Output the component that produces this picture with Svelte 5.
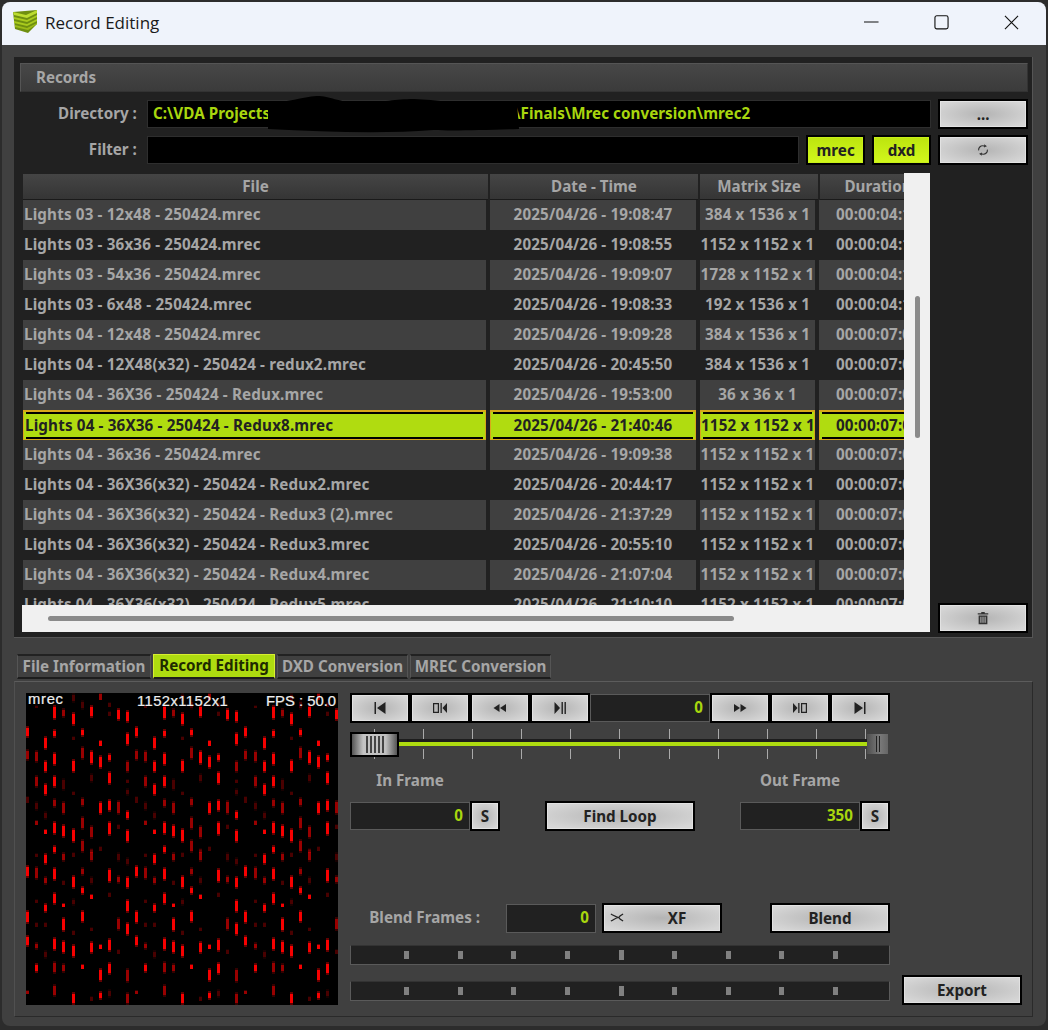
<script lang="ts">
  // Table rows: file, date, matrix, duration
  const rows = [
    ['Lights 03 - 12x48 - 250424.mrec', '2025/04/26 - 19:08:47', '384 x 1536 x 1', '00:00:04:12'],
    ['Lights 03 - 36x36 - 250424.mrec', '2025/04/26 - 19:08:55', '1152 x 1152 x 1', '00:00:04:12'],
    ['Lights 03 - 54x36 - 250424.mrec', '2025/04/26 - 19:09:07', '1728 x 1152 x 1', '00:00:04:12'],
    ['Lights 03 - 6x48 - 250424.mrec', '2025/04/26 - 19:08:33', '192 x 1536 x 1', '00:00:04:12'],
    ['Lights 04 - 12x48 - 250424.mrec', '2025/04/26 - 19:09:28', '384 x 1536 x 1', '00:00:07:02'],
    ['Lights 04 - 12X48(x32) - 250424 - redux2.mrec', '2025/04/26 - 20:45:50', '384 x 1536 x 1', '00:00:07:02'],
    ['Lights 04 - 36X36 - 250424 - Redux.mrec', '2025/04/26 - 19:53:00', '36 x 36 x 1', '00:00:07:02'],
    ['Lights 04 - 36X36 - 250424 - Redux8.mrec', '2025/04/26 - 21:40:46', '1152 x 1152 x 1', '00:00:07:02'],
    ['Lights 04 - 36x36 - 250424.mrec', '2025/04/26 - 19:09:38', '1152 x 1152 x 1', '00:00:07:02'],
    ['Lights 04 - 36X36(x32) - 250424 - Redux2.mrec', '2025/04/26 - 20:44:17', '1152 x 1152 x 1', '00:00:07:02'],
    ['Lights 04 - 36X36(x32) - 250424 - Redux3 (2).mrec', '2025/04/26 - 21:37:29', '1152 x 1152 x 1', '00:00:07:02'],
    ['Lights 04 - 36X36(x32) - 250424 - Redux3.mrec', '2025/04/26 - 20:55:10', '1152 x 1152 x 1', '00:00:07:02'],
    ['Lights 04 - 36X36(x32) - 250424 - Redux4.mrec', '2025/04/26 - 21:07:04', '1152 x 1152 x 1', '00:00:07:02'],
    ['Lights 04 - 36X36(x32) - 250424 - Redux5.mrec', '2025/04/26 - 21:10:10', '1152 x 1152 x 1', '00:00:07:02']
  ];
  const SELECTED = 7;

  // Transport icons, 16x16 box
  const icons = {
    first: 'M2.5 2h1.5v12H2.5z M13.5 2v12L5 8z',
    stepBack: 'M1 3h6v10H1z M2.2 4.200v7.600h3.600V4.200z M8.500 3h1.300v10H8.500z M15 3v10L10.500 8z',
    rewind: 'M7.5 4v8L1.500 8z M14 4v8L8 8z',
    playPause: 'M2.5 2v12L8 8z M9.500 2h1.400v12H9.500z M12.500 2h1.400v12h-1.400z',
    forward: 'M2 4v8L8 8z M8.500 4v8L14.500 8z',
    stepFwd: 'M1 3v10L5.500 8z M6.200 3h1.300v10H6.200z M9 3h6v10H9z M10.200 4.200v7.600h3.600V4.200z',
    last: 'M2.5 2v12L11 8z M12 2h1.500v12H12z'
  };

  // One 12-column period of the preview texture: col, top, bottom, brightness
  const B = 0.95, M = 0.5, D = 0.22;
  const period: number[][] = [
    [0,33,45,B],[0,56,68,M],[0,103,110,D],[0,172,185,B],[0,217,231,B],[0,242,254,B],[0,297,301,M],
    [1,12,15,D],[1,57,70,M],[1,82,95,M],[1,108,118,D],[1,127,132,M],[1,160,164,D],[1,173,187,M],[1,206,210,D],[1,229,234,D],[1,249,257,M],[1,270,280,B],
    [2,43,57,B],[2,67,80,B],[2,90,103,B],[2,118,127,D],[2,136,141,B],[2,160,172,B],[2,183,192,M],[2,210,220,B],[2,229,234,D],[2,257,266,D],
    [3,12,27,B],[3,36,45,B],[3,59,73,B],[3,82,95,B],[3,105,115,M],[3,128,142,B],[3,152,161,B],[3,174,188,B],[3,199,212,B],[3,244,258,B],[3,268,281,M],[3,291,304,M],
    [4,15,25,M],[4,85,98,D],[4,108,122,M],[4,131,145,B],[4,159,169,M],[4,187,192,D],[4,210,214,B],[4,224,239,B],[4,247,261,B],[4,270,280,M],
    [5,0,10,D],[5,19,33,B],[5,43,47,D],[5,66,80,B],[5,98,102,D],[5,135,150,B],[5,159,164,D],[5,182,196,B],[5,205,213,D],[5,237,242,D],[5,251,265,B],[5,299,312,B],
    [6,7,17,D],[6,35,44,B],[6,53,67,M],[6,104,114,M],[6,123,137,M],[6,146,160,M],[6,174,183,M],[6,193,202,B],[6,217,230,B],[6,271,276,B],
    [7,12,25,B],[7,57,72,B],[7,80,90,D],[7,132,146,M],[7,155,160,D],[7,157,169,M],[7,183,192,D],[7,201,206,B],[7,234,238,D],[7,248,261,B],[7,303,308,D],
    [8,0,7,M],[8,47,53,B],[8,62,76,B],[8,108,122,B],[8,153,158,D],[8,251,256,B],[8,275,289,B],[8,298,307,B],
    [9,9,14,D],[9,18,23,D],[9,60,69,B],[9,78,92,B],[9,106,119,B],[9,128,143,B],[9,175,190,B],[9,199,204,D],[9,245,259,B],[9,269,282,B],[9,296,305,D],
    [10,15,28,B],[10,107,122,M],[10,131,136,D],[10,159,169,D],[10,182,191,M],[10,224,238,M],[10,256,261,D],
    [11,17,30,B],[11,39,53,B],[11,67,80,M],[11,86,90,D],[11,95,103,D],[11,117,127,B],[11,136,150,B],[11,164,173,D],[11,183,196,B],[11,206,220,B],[11,229,243,B],[11,275,290,M],[11,299,312,M]
  ];
  const bars = [0, 1, 2].flatMap((k) =>
    period.map(([c, y0, y1, a]) => ({ x: (c + 12 * k) * 9.1, y0, y1, a }))
  );

  const smallTicks = Array.from({ length: 9 }, (_, i) => i);
</script>

{#snippet icon(d)}
  <svg class="glyph" viewBox="0 0 16 16" aria-hidden="true"><path d={d} fill-rule="evenodd" /></svg>
{/snippet}

{#snippet blendSlider()}
  <div class="blendSlider">
    {#each smallTicks as i}
      <span class="blendTick" class:mid={i === 4}></span>
    {/each}
  </div>
{/snippet}

<div class="window">
  <header class="titlebar">
    <svg class="logo" viewBox="0 0 24 24" aria-hidden="true">
      <polygon points="0,2 24,0 24,14 15,23 2,19" fill="#6f8f10" />
      <polygon points="0,2 13,5 24,0 24,3 14,8 1,5" fill="#bcdc30" />
      <polygon points="1,7 14,10 24,5 24,7 14,12 1,9" fill="#a9cb1e" />
      <polygon points="1,11 14,14 24,9 24,11 14,16 1,13" fill="#a9cb1e" />
      <polygon points="2,15 14,18 24,13 24,14 15,20 2,17" fill="#9cbc18" />
    </svg>
    <span class="winTitle">Record Editing</span>
    <div class="winControls">
      <svg viewBox="0 0 16 16" aria-hidden="true"><path d="M0 7.500h15.500" /></svg>
      <svg viewBox="0 0 16 16" aria-hidden="true"><rect x="1" y="0.800" width="14" height="14" rx="2" /></svg>
      <svg viewBox="0 0 16 16" aria-hidden="true"><path d="M1 1l14 14M15 1L1 15" /></svg>
    </div>
  </header>

  <main class="content">
    <section class="records">
      <div class="recordsHead">Records</div>

      <div class="formRow dirRow">
        <label class="formLabel" for="dir">Directory :</label>
        <div class="pathBox" id="dir">
          <span>C:\VDA Projects</span>
          <span class="pathTail">\Finals\Mrec conversion\mrec2</span>
          <svg class="scribble" viewBox="0 0 260 38" preserveAspectRatio="none" aria-hidden="true">
            <path d="M0 8 C20 6 35 1 50 0 C65 0 70 6 95 7 C120 6 130 3 150 3 C175 4 190 7 215 7 L256 8 L258 33 C220 34 190 35 170 34 C120 38 60 36 0 33 Z" fill="#000" />
          </svg>
        </div>
        <button class="btn sideBtn">...</button>
      </div>

      <div class="formRow filterRow">
        <label class="formLabel" for="filter">Filter :</label>
        <div class="filterBox" id="filter"></div>
        <button class="btn limeBtn">mrec</button>
        <button class="btn limeBtn">dxd</button>
        <button class="btn sideBtn" aria-label="Refresh">
          <svg class="refresh" viewBox="0 0 16 16" aria-hidden="true">
            <path d="M3 8.500C2.600 5.200 5.200 3 8 3.200l2 .6M13 7.500c.4 3.300-2.200 5.500-5 5.300l-2-.6" fill="none" stroke="#333" stroke-width="1.300" />
            <path d="M9.500 1.500l3 2.200-3.400 1.500zM6.500 14.500l-3-2.200 3.400-1.500z" fill="#333" />
          </svg>
        </button>
      </div>

      <div class="listRow">
        <div class="list">
          <div class="viewport">
            <div class="tableHead">
              <div class="th colFile">File</div>
              <div class="th colDate">Date - Time</div>
              <div class="th colMatrix">Matrix Size</div>
              <div class="th colDur">Duration</div>
            </div>
            {#each rows as row, i}
              <div class="row" class:odd={i % 2 === 0} class:selected={i === SELECTED}>
                <div class="td colFile left">{row[0]}</div>
                <div class="td colDate">{row[1]}</div>
                <div class="td colMatrix">{row[2]}</div>
                <div class="td colDur">{row[3]}</div>
              </div>
            {/each}
          </div>
          <div class="vScroll"><div class="vThumb"></div></div>
          <div class="hScroll"><div class="hThumb"></div></div>
        </div>
        <button class="btn sideBtn trashBtn" aria-label="Delete">
          <svg class="trash" viewBox="0 0 16 16" aria-hidden="true">
            <path d="M6 1h4v1.500h4v1.500H2V2.500h4z M3 5h10v10H3z M5 6.500v7h1.200v-7z M7.400 6.500v7h1.200v-7z M9.800 6.500v7H11v-7z" fill="#333" fill-rule="evenodd" />
          </svg>
        </button>
      </div>
    </section>

    <nav class="tabs">
      <div class="tab tab1">File Information</div>
      <div class="tab tab2 active">Record Editing</div>
      <div class="tab tab3">DXD Conversion</div>
      <div class="tab tab4">MREC Conversion</div>
    </nav>

    <section class="editor">
      <div class="preview">
        <svg class="previewBars" viewBox="0 0 312 312" aria-hidden="true">
          {#each bars as b}
            <rect x={b.x} y={b.y0} width="3" height={b.y1 - b.y0} fill="#f00" opacity={b.a * 0.4} />
            {#if b.y1 - b.y0 > 7}
              <rect x={b.x} y={b.y0 + 2} width="3" height={b.y1 - b.y0 - 4} fill="#f00" opacity={b.a} />
            {:else}
              <rect x={b.x} y={b.y0 + 1} width="3" height={b.y1 - b.y0 - 1} fill="#f00" opacity={b.a} />
            {/if}
          {/each}
        </svg>
        <div class="previewInfo">
          <span class="infoType">mrec</span>
          <span class="infoSize">1152x1152x1</span>
          <span class="infoFps">FPS : 50.0</span>
        </div>
      </div>

      <div class="controls">
        <div class="transport">
          <button class="btn tBtn" aria-label="First">{@render icon(icons.first)}</button>
          <button class="btn tBtn" aria-label="Step back">{@render icon(icons.stepBack)}</button>
          <button class="btn tBtn" aria-label="Rewind">{@render icon(icons.rewind)}</button>
          <button class="btn tBtn" aria-label="Play">{@render icon(icons.playPause)}</button>
          <div class="numBox frameBox">0</div>
          <button class="btn tBtn" aria-label="Forward">{@render icon(icons.forward)}</button>
          <button class="btn tBtn" aria-label="Step forward">{@render icon(icons.stepFwd)}</button>
          <button class="btn tBtn" aria-label="Last">{@render icon(icons.last)}</button>
        </div>

        <div class="timeline">
          <div class="ticks">
            {#each Array(11) as _}<span class="tick"></span>{/each}
          </div>
          <div class="rail"></div>
          <div class="thumbIn">
            {#each Array(5) as _}<span></span>{/each}
          </div>
          <div class="thumbOut"><span></span><span></span></div>
        </div>

        <div class="frameLabels">
          <div class="frameLabel">In Frame</div>
          <div></div>
          <div class="frameLabel">Out Frame</div>
        </div>

        <div class="frameRow">
          <div class="frameField">
            <div class="numBox">0</div>
            <button class="btn setBtn">S</button>
          </div>
          <button class="btn">Find Loop</button>
          <div class="frameField">
            <div class="numBox">350</div>
            <button class="btn setBtn">S</button>
          </div>
        </div>

        <div class="blendRow">
          <span class="blendLabel">Blend Frames :</span>
          <div class="numBox blendBox">0</div>
          <button class="btn xfBtn">
            <svg class="xfIcon" viewBox="0 0 16 10" aria-hidden="true">
              <path d="M1 1C5 3 7 5 10 5C7 5 5 7 1 9M15 1C11 3 10 5 10 5C10 5 11 7 15 9" fill="none" stroke="#222" stroke-width="1.400" />
            </svg>
            XF
          </button>
          <button class="btn blendBtn">Blend</button>
        </div>

        <div class="bottomRow">
          <div class="blendSliders">
            {@render blendSlider()}
            {@render blendSlider()}
          </div>
          <button class="btn exportBtn">Export</button>
        </div>
      </div>
    </section>
  </main>
</div>

<style>
  :global(body) {
    margin: 0;
    background: #2c2c2c;
  }

  .window {
    box-sizing: border-box;
    width: 1044px;
    height: 1024px;
    margin: 2px 0 0 2px;
    background: #404040;
    border-radius: 8px;
    overflow: hidden;
    font-family: "Noto Sans", "Open Sans", sans-serif;
    font-size: 15.2px;
    font-weight: 700;
    color: #a6a6a6;
  }

  /* Title bar */
  .titlebar {
    box-sizing: border-box;
    display: flex;
    align-items: center;
    height: 43px;
    padding: 0 0 3px 11px;
    background: #eff3fb;
  }

  .logo {
    width: 24px;
    height: 24px;
    margin-right: 8px;
  }

  .winTitle {
    font-family: "Open Sans", sans-serif;
    font-weight: 400;
    font-size: 17px;
    color: #1a1a1a;
  }

  .winControls {
    display: flex;
    gap: 55px;
    margin-left: auto;
    margin-right: 27px;
  }

  .winControls svg {
    width: 15px;
    height: 15px;
    fill: none;
    stroke: #111;
    stroke-width: 1.200;
  }

  /* Layout */
  .content {
    padding: 12px 13px 0 12px;
  }

  .records {
    box-sizing: border-box;
    height: 581px;
    padding: 6px 4px 0 6px;
    background: #212121;
    border-right: 1px solid #555;
    border-bottom: 1px solid #555;
  }

  .recordsHead {
    box-sizing: border-box;
    height: 29px;
    padding-left: 15px;
    line-height: 27px;
    background: linear-gradient(#474747, #3b3b3b);
    border: 1px solid #333;
    border-top-color: #555;
    border-left-color: #555;
  }

  .formRow {
    display: flex;
    align-items: center;
    gap: 7px;
    height: 30px;
  }

  .dirRow {
    margin-top: 7px;
  }

  .filterRow {
    margin-top: 6px;
  }

  .formLabel {
    width: 117px;
    margin: 0 3px 2px 0;
    text-align: right;
  }

  .pathBox,
  .filterBox {
    box-sizing: border-box;
    height: 28px;
    background: #000;
    border: 1px solid #2e2e2e;
  }

  .pathBox {
    position: relative;
    display: flex;
    width: 785px;
    padding-left: 5px;
    line-height: 24px;
    letter-spacing: 0.05px;
    color: #a8d60e;
  }

  .pathTail {
    margin-left: 244px;
  }

  .scribble {
    position: absolute;
    left: 120px;
    top: -5px;
    width: 253px;
    height: 38px;
  }

  .filterBox {
    width: 653px;
  }

  /* Buttons */
  .btn {
    box-sizing: border-box;
    width: 150px;
    height: 30px;
    padding: 0 0 1px;
    font: inherit;
    color: #222;
    background: radial-gradient(ellipse at center, #b4b4b4 0%, #d6d6d6 85%);
    border: 2px solid #000;
    box-shadow: inset 0 0 0 1px #e2e2e2;
  }

  .sideBtn {
    width: 90px;
    line-height: 20px;
  }

  .limeBtn {
    width: 59px;
    background: linear-gradient(#bce40e, #d2f81c);
    box-shadow: inset 0 0 0 1px #c8f018;
  }

  .refresh {
    display: block;
    width: 14px;
    height: 14px;
    margin: auto;
  }

  .trash {
    display: block;
    width: 14px;
    height: 14px;
    margin: auto;
  }

  /* File list */
  .listRow {
    display: flex;
    justify-content: space-between;
    align-items: flex-end;
    height: 460px;
    margin-top: 8px;
    margin-left: 2px;
  }

  .list {
    display: grid;
    grid-template-columns: 882px 26px;
    grid-template-rows: 432px 27px;
    width: 908px;
    height: 459px;
    margin-bottom: 1px;
    background: #f0f0f0;
  }

  .viewport {
    grid-column: 1;
    grid-row: 1;
    min-width: 0;
    overflow: hidden;
    padding-left: 1px;
    padding-top: 1px;
    background: #212121;
  }

  .vScroll {
    grid-column: 2;
    grid-row: 1 / 3;
    padding-top: 123px;
    padding-left: 11px;
  }

  .vThumb {
    width: 5px;
    height: 142px;
    border-radius: 3px;
    background: #8a8a8a;
  }

  .hScroll {
    grid-column: 1;
    grid-row: 2;
    padding: 11px 0 0 26px;
  }

  .hThumb {
    width: 686px;
    height: 5px;
    border-radius: 3px;
    background: #8a8a8a;
  }

  .tableHead,
  .row {
    display: flex;
    width: 930px;
  }

  .tableHead {
    height: 26px;
  }

  .row {
    height: 30px;
    letter-spacing: 0.16px;
  }

  .th,
  .td {
    box-sizing: border-box;
    flex: none;
    text-align: center;
    white-space: nowrap;
    overflow: hidden;
  }

  .th {
    line-height: 25px;
    background: linear-gradient(#454545, #353535);
    border-bottom: 1px solid #1a1a1a;
    margin-right: 2px;
  }

  .td {
    line-height: 29px;
    margin-right: 4px;
  }

  .th.colFile { width: 465px; }
  .th.colDate { width: 208px; }
  .th.colMatrix { width: 118px; }
  .th.colDur { width: 116px; }

  .td.colFile { width: 463px; }
  .td.colDate { width: 206px; }
  .td.colMatrix { width: 115px; }
  .td.colDur { width: 118px; }

  .left {
    padding-left: 1px;
    text-align: left;
  }

  .odd .td {
    background: #404040;
  }

  .selected .td {
    position: relative;
    line-height: 26px;
    height: 30px;
    color: #222;
    background: #b0dc10;
    border: solid #d8a81a;
    border-width: 2px 1px 1px;
  }

  .selected .td::before,
  .selected .td::after {
    content: "";
    position: absolute;
    left: 2px;
    right: 2px;
    height: 2px;
    background: #000;
  }

  .selected .td::before {
    top: 0;
  }

  .selected .td::after {
    bottom: 0;
  }

  /* Tabs */
  .tabs {
    display: flex;
    gap: 2px;
    height: 25px;
    margin: 16px 0 2px 3px;
  }

  .tab {
    box-sizing: border-box;
    text-align: center;
    line-height: 21px;
    white-space: nowrap;
    background: #404040;
    border: 1px solid #555;
    border-top: 2px solid #222;
    border-bottom: 2px solid #1d1d1d;
  }

  .tab1 { width: 134px; }
  .tab2 { width: 122px; }
  .tab3 { width: 131px; }
  .tab4 { width: 141px; }

  .tab.active {
    color: #1f2a00;
    background: #aedc10;
    border: 1px solid #d8ef30;
    border-bottom: 2px solid #1d1d1d;
  }

  /* Editor */
  .editor {
    box-sizing: border-box;
    display: flex;
    gap: 12px;
    height: 336px;
    padding: 11px 0 0 11px;
    border: 1px solid #2a2a2a;
    border-top-color: #5c5c5c;
    border-left-color: #505050;
  }

  .preview {
    position: relative;
    flex: none;
    width: 312px;
    height: 312px;
    background: #000;
  }

  .previewBars {
    display: block;
    width: 312px;
    height: 312px;
    shape-rendering: crispEdges;
  }

  .previewInfo {
    position: absolute;
    inset: 0;
    font-family: "Liberation Sans", Arial, sans-serif;
    font-size: 14.800px;
    font-weight: 400;
    color: #eee;
    -webkit-text-stroke: 0.2px #eee;
  }

  .previewInfo span {
    position: absolute;
    line-height: 17px;
  }

  .infoType { left: 2px; top: -2px; letter-spacing: 0.7px; }
  .infoSize { left: 111px; top: 0; letter-spacing: 0.4px; }
  .infoFps { right: 2px; top: 0; }

  .controls {
    width: 672px;
  }

  .transport {
    display: flex;
    width: 540px;
  }

  .tBtn {
    width: 60px;
    padding: 0;
  }

  .glyph {
    display: block;
    width: 16px;
    height: 16px;
    margin: auto;
    fill: #222;
  }

  .numBox {
    box-sizing: border-box;
    width: 120px;
    height: 28px;
    margin-top: 1px;
    padding-right: 6px;
    text-align: right;
    line-height: 24px;
    color: #a8d60e;
    background: #212121;
    border: 1px solid #5a5a5a;
  }

  .frameBox {
    flex: none;
  }

  .timeline {
    position: relative;
    width: 540px;
    height: 30px;
    margin-top: 6px;
  }

  .ticks {
    display: flex;
    justify-content: space-between;
    padding: 0 24px 0 24px;
  }

  .tick {
    width: 1px;
    height: 30px;
    background: #aaa;
  }

  .rail {
    position: absolute;
    left: 48px;
    right: 23px;
    top: 10px;
    height: 7px;
    background: #404040;
    border-top: 3px solid #1d1d1d;
    box-sizing: content-box;
    background-image: linear-gradient(#aedc10, #aedc10);
    background-repeat: no-repeat;
    background-size: 100% 4px;
  }

  .thumbIn {
    position: absolute;
    left: 0;
    top: 3px;
    box-sizing: border-box;
    display: flex;
    justify-content: center;
    gap: 2px;
    width: 49px;
    height: 25px;
    background: linear-gradient(90deg, #555, #c4c4c4 25%, #c0c0c0 75%, #555);
    border: 2px solid #000;
  }

  .thumbIn span,
  .thumbOut span {
    width: 2px;
    background: #444;
  }

  .thumbIn span {
    margin: 2px 0;
  }

  .thumbOut {
    position: absolute;
    left: 517px;
    top: 5px;
    display: flex;
    justify-content: center;
    gap: 2px;
    width: 21px;
    height: 20px;
    background: linear-gradient(90deg, #4f4f4f, #7a7a7a 60%, #666);
  }

  .thumbOut span {
    width: 1px;
    margin: 2px 0;
    background: #222;
  }

  .frameLabels,
  .frameRow {
    display: grid;
    grid-template-columns: 150px 150px 150px;
    justify-content: space-between;
    width: 540px;
  }

  .frameLabels {
    height: 20px;
    margin-top: 11px;
    line-height: 20px;
  }

  .frameLabel {
    width: 120px;
    text-align: center;
  }

  .frameRow {
    margin-top: 11px;
  }

  .frameField {
    display: flex;
  }

  .setBtn {
    width: 30px;
  }

  .blendRow {
    display: flex;
    align-items: center;
    width: 540px;
    margin-top: 72px;
  }

  .blendLabel {
    width: 130px;
    margin: 0 26px 2px 0;
    text-align: right;
  }

  .blendBox {
    width: 90px;
    height: 29px;
    margin: 0 6px 0 0;
  }

  .xfBtn {
    position: relative;
    width: 120px;
    padding-left: 30px;
  }

  .xfIcon {
    position: absolute;
    left: 6px;
    top: 8px;
    width: 14px;
    height: 9px;
  }

  .blendBtn {
    width: 120px;
    margin-left: 48px;
  }

  .bottomRow {
    display: flex;
    align-items: flex-end;
    gap: 12px;
    margin-top: 12px;
  }

  .blendSliders {
    display: flex;
    flex-direction: column;
    gap: 16px;
    padding-bottom: 4px;
  }

  .blendSlider {
    box-sizing: border-box;
    display: flex;
    justify-content: space-between;
    align-items: center;
    width: 540px;
    height: 20px;
    padding: 0 51px 0 53px;
    background: #212121;
    border: 1px solid #5a5a5a;
    border-color: #333 #5a5a5a #5a5a5a #5a5a5a;
  }

  .blendTick {
    width: 5px;
    height: 8px;
    background: #808080;
  }

  .blendTick.mid {
    height: 10px;
  }

  .exportBtn {
    width: 120px;
  }
</style>
